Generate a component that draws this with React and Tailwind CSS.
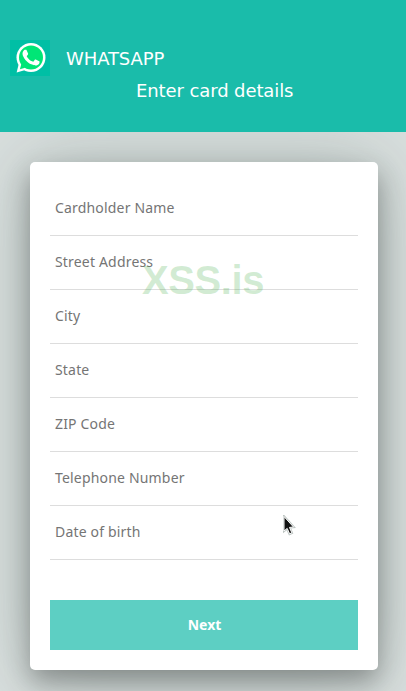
const fields = [
  "Cardholder Name",
  "Street Address",
  "City",
  "State",
  "ZIP Code",
  "Telephone Number",
  "Date of birth",
];

const Logo = () => (
  <div className="w-10 h-9 bg-[#00bfa5] flex items-center justify-center">
    <svg width="40" height="36" viewBox="0 0 40 36">
      <path
        d="M6.6 32.4 L8.6 24.6 A14.4 14.4 0 0 1 14.5 30.3 Z"
        fill="#fff"
      />
      <circle cx="21" cy="17.4" r="14.5" fill="#fff" />
      <path d="M9.9 29.2 L11.4 23.8 L15.2 27.8 Z" fill="#00e676" />
      <circle cx="21" cy="17.4" r="12" fill="#00e676" />
      <path
        d="M17.8 11.1c-.3-.6-.6-.6-.9-.6h-.8c-.3 0-.8.1-1.2.5-.4.5-1.6 1.5-1.6 3.7s1.6 4.3 1.8 4.6c.2.3 3.1 4.9 7.6 6.6 3.8 1.5 4.5 1.2 5.4 1.1.8-.1 2.6-1.1 3-2.1.4-1 .4-1.9.3-2.1-.1-.2-.4-.3-.9-.5l-3.1-1.5c-.4-.2-.7-.2-1 .2l-1.4 1.8c-.3.3-.5.3-1 .1-.4-.2-1.9-.7-3.6-2.2-1.3-1.2-2.2-2.6-2.5-3.1-.3-.4 0-.7.2-.9l.7-.8.4-.7c.2-.3.1-.6 0-.8z"
        transform="translate(0 0) scale(.94)"
        fill="#fff"
      />
    </svg>
  </div>
);

const Header = () => (
  <header className="h-[132px] shrink-0 bg-[#1abcaa] pt-10 px-2.5 text-white text-lg tracking-[-0.1px] font-['DejaVu_Sans',sans-serif]">
    <div className="flex items-center gap-4">
      <Logo />
      <span className="leading-9 pt-px -mb-px">WHATSAPP</span>
    </div>
    <p className="ml-[126px] leading-[30px]">Enter card details</p>
  </header>
);

const Field = ({ label }) => (
  <div className="h-[54px] border-b border-[#dddddd] px-[5px] pb-px flex items-center text-sm tracking-[0.18px] text-[#757575]">
    {label}
  </div>
);

const Cursor = () => (
  <svg
    className="absolute left-[253px] top-[353px]"
    width="14"
    height="22"
    viewBox="0 0 14 22"
  >
    <path
      d="M1 1.5 L1 16 L4.2 13.4 L6.6 18.8 L8.8 17.8 L6.5 12.4 L10.5 12 Z"
      fill="#111"
      stroke="#bcc4c1"
      strokeWidth="2.4"
    />
    <path
      d="M1 1.5 L1 16 L4.2 13.4 L6.6 18.8 L8.8 17.8 L6.5 12.4 L10.5 12 Z"
      fill="#111"
      stroke="#fff"
      strokeWidth="1"
    />
  </svg>
);

const App = () => {
  return (
    <div className="h-[691px] w-full flex flex-col overflow-hidden bg-[#d9dfde] font-['Noto_Sans',sans-serif]">
      <Header />
      <main className="pt-[30px] pl-[30px] pr-7 overflow-hidden flex-1">
        <div className="relative h-[508px] rounded-[5px] bg-white p-5 flex flex-col shadow-[0_12px_26px_rgba(0,0,0,0.3),0_4px_76px_rgba(30,60,52,0.26)]">
          {fields.map((label) => (
            <Field key={label} label={label} />
          ))}
          <div className="mt-auto h-[50px] bg-[#5dcfc3] flex items-center justify-center pl-px text-sm font-bold text-white">
            Next
          </div>
          <span className="absolute left-[112px] top-[94px] text-[40px] leading-[48px] tracking-[-0.4px] font-bold text-[#4caf50]/25 font-['Liberation_Sans',sans-serif]">
            XSS.is
          </span>
          <Cursor />
        </div>
      </main>
    </div>
  );
};

export default App;
